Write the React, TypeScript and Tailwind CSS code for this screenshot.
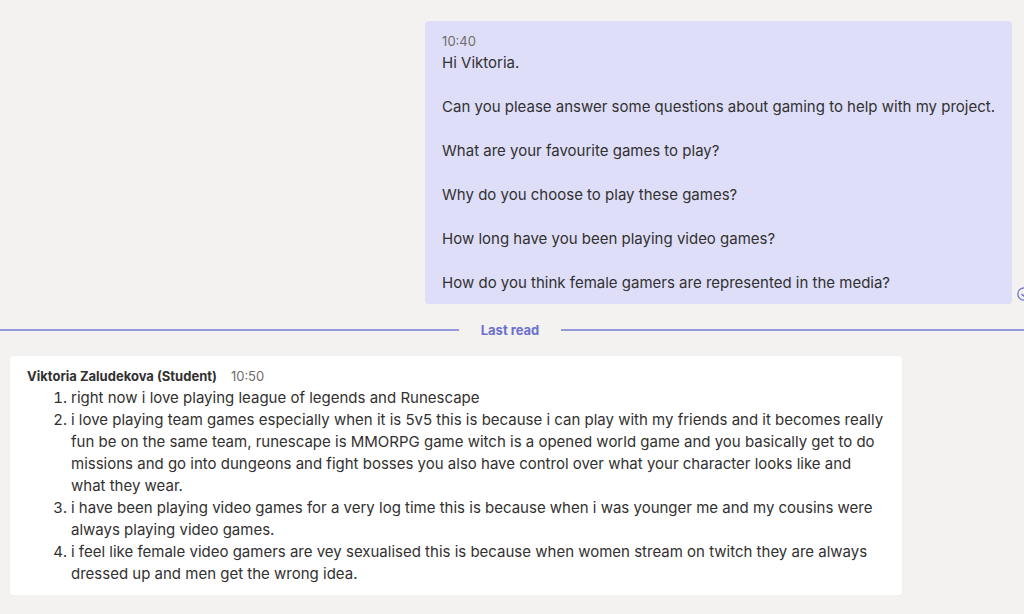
const questions = [
  'Hi Viktoria.',
  'Can you please answer some questions about gaming to help with my project.',
  'What are your favourite games to play?',
  'Why do you choose to play these games?',
  'How long have you been playing video games?',
  'How do you think female gamers are represented in the media?',
];

const answers = [
  'right now i love playing league of legends and Runescape',
  'i love playing team games especially when it is 5v5 this is because i can play with my friends and it becomes really fun be on the same team, runescape is MMORPG game witch is a opened world game and you basically get to do missions and go into dungeons and fight bosses you also have control over what your character looks like and what they wear.',
  'i have been playing video games for a very log time this is because when i was younger me and my cousins were always playing video games.',
  'i feel like female video gamers are vey sexualised this is because when women stream on twitch they are always dressed up and men get the wrong idea.',
];

function SeenIcon() {
  return (
    <svg className="mb-[3px] size-[14px] shrink-0" viewBox="0 0 14 14" fill="none" stroke="#6b70cf" strokeWidth="1.3" role="img" aria-label="Sent">
      <circle cx="7" cy="7" r="6.2" />
      <path d="M4.5 7 6.3 8.8 9.8 5.3" />
    </svg>
  );
}

export default function App() {
  return (
    <main className="min-h-screen overflow-x-hidden bg-[#f3f2f1] pt-[21px] font-['Inter',sans-serif] text-[15px] leading-[22px] text-[#323130]">
      <section className="-mr-[7px] flex items-end justify-end gap-[5px]">
        <article className="rounded-[4px] bg-[#dedef9] pt-[10px] pr-[17px] pb-[10px] pl-[17px]">
          <time className="block text-[13px] leading-[21px] text-[#6f6d6b]">10:40</time>
          <div className="flex flex-col gap-[22px]">
            {questions.map((q) => (
              <p key={q}>{q}</p>
            ))}
          </div>
        </article>
        <SeenIcon />
      </section>
      <div className="mt-4 -ml-1 flex h-5 items-center gap-[22px] text-[13px] font-bold text-[#6b70cf]">
        <span className="h-0.5 flex-1 bg-[#9599db]" />
        Last read
        <span className="h-0.5 flex-1 bg-[#9599db]" />
      </div>
      <article className="mt-4 ml-[10px] max-w-[892px] rounded-[4px] bg-white pt-[10px] pr-4 pb-[10px] pl-[17px]">
        <header className="flex gap-[14px] text-[13px] leading-[21px]">
          <strong className="font-bold">Viktoria Zaludekova (Student)</strong>
          <time className="text-[#6f6d6b]">10:50</time>
        </header>
        <ol className="list-decimal pl-11">
          {answers.map((a) => (
            <li key={a}>{a}</li>
          ))}
        </ol>
      </article>
    </main>
  );
}
